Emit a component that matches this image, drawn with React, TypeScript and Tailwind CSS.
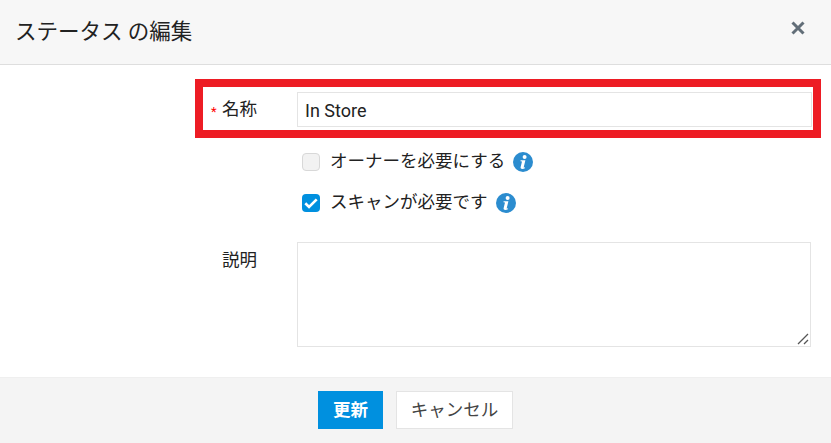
function InfoIcon() {
  return (
    <svg viewBox="0 0 20 20" className="h-[20px] w-[20px] shrink-0">
      <circle cx="10" cy="10" r="10" fill="#2b8ccf" />
      <circle cx="11.6" cy="5" r="2" fill="#fff" />
      <path d="M7.6 8.2h4.8l-1.7 7c-.1.5.4.5 1.400 0l-.2 1c-1.600 1-4.700 1.400-4.300-.9l1.400-5.900-1.500-.2z" fill="#fff" />
    </svg>
  );
}

export default function App() {
  return (
    <div className="flex h-[443px] w-[831px] flex-col bg-white font-['Roboto','Noto_Sans_CJK_JP',sans-serif] text-[#222]">
      <div className="flex h-[65px] items-center justify-between border-b border-[#dedede] bg-[#f7f7f7] pl-[15px] pr-[26px]">
        <h1 className="text-[21.5px] font-normal leading-none">ステータス の編集</h1>
        <svg viewBox="0 0 14 14" className="mb-[9px] h-[14px] w-[14px]">
          <path d="M1.500 1.500l11 11M12.500 1.500l-11 11" stroke="#626e78" strokeWidth="3" />
        </svg>
      </div>

      <div className="flex flex-1 flex-col pt-[14px]">
        <div className="ml-[195px] flex h-[59px] w-[626px] items-center border-[8px] border-[#ed1c24]">
          <span className="ml-[8px] mt-[5px] w-[11px] text-[13px] leading-none text-[#f00]">*</span>
          <label className="mt-[1px] w-[75px] text-[17.5px]">名称</label>
          <input
            readOnly
            value="In Store"
            className="mt-[2px] h-[35px] w-[515px] border border-[#e4e4e4] px-[7px] pt-[2px] text-[18px] outline-none"
          />
        </div>

        <div className="ml-[302px] mt-[14px] flex h-[20px] items-center">
          <span className="mb-[1px] h-[18px] w-[18px] rounded-[4px] border border-[#d8d8d8] bg-[#f2f2f2]" />
          <span className="ml-[10px] pb-[2px] text-[17.5px]">オーナーを必要にする</span>
          <span className="ml-[8px]"><InfoIcon /></span>
        </div>

        <div className="ml-[302px] mt-[21px] flex h-[20px] items-center">
          <span className="mb-[1px] flex h-[18px] w-[18px] items-center justify-center rounded-[4px] bg-[#0090df]">
            <svg viewBox="0 0 14 14" className="h-[16px] w-[16px]">
              <path d="M2 7.200l3.300 3.300 6.700-6.700" fill="none" stroke="#fff" strokeWidth="2.300" />
            </svg>
          </span>
          <span className="ml-[10px] pb-[2px] text-[17.5px]">スキャンが必要です</span>
          <span className="ml-[8px]"><InfoIcon /></span>
        </div>

        <div className="ml-[222px] mt-[29px] flex">
          <label className="mt-[5px] w-[75px] text-[17.5px]">説明</label>
          <div className="relative h-[105px] w-[514px]">
            <textarea readOnly className="block h-full w-full resize-none border border-[#e4e4e4] outline-none" />
            <svg viewBox="0 0 12 12" className="absolute bottom-[2px] right-[2px] h-[12px] w-[12px]">
              <path d="M1 11L11 1M7 11l4-4" stroke="#555" strokeWidth="1.300" fill="none" />
            </svg>
          </div>
        </div>
      </div>

      <div className="flex h-[66px] items-start border-t border-[#efefef] bg-[#f4f4f4] pl-[318px] pt-[13px]">
        <button className="h-[38px] w-[65px] bg-[#0090df] text-[17.5px] font-semibold text-white">更新</button>
        <button className="ml-[13px] h-[38px] w-[117px] border border-[#e4e4e4] bg-white text-[17.5px] text-[#444]">キャンセル</button>
      </div>
    </div>
  );
}
